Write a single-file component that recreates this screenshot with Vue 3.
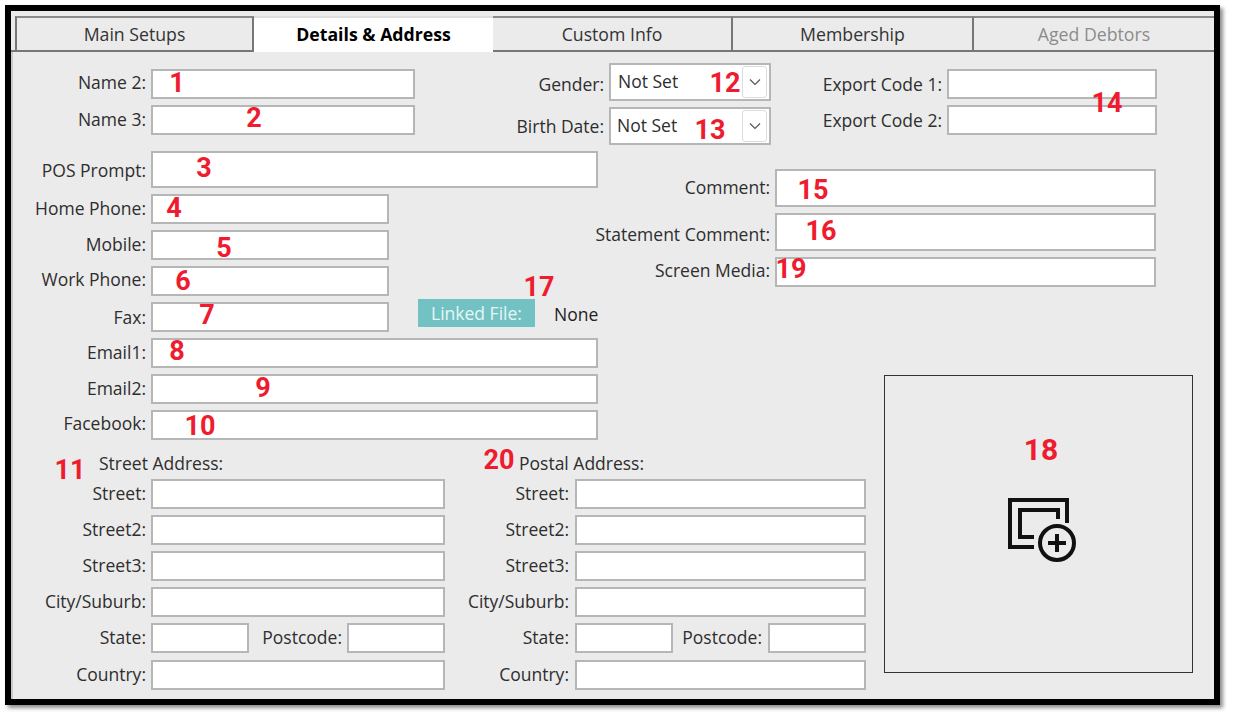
<script setup>
const tabs = [
  { label: 'Main Setups' },
  { label: 'Details & Address', active: true },
  { label: 'Custom Info' },
  { label: 'Membership' },
  { label: 'Aged Debtors', disabled: true },
]
const addresses = [
  { title: 'Street Address:', cls: 'addr-left' },
  { title: 'Postal Address:', cls: 'addr-right' },
]
const marks = [
  ['1', 177, 83], ['2', 254, 118], ['3', 204, 168], ['4', 174, 208], ['5', 224, 248],
  ['6', 183, 281], ['7', 207, 315], ['8', 177, 351], ['9', 263, 388], ['10', 200, 426],
  ['11', 70, 470], ['12', 725, 83], ['13', 710, 130], ['14', 1107, 103], ['15', 813, 190],
  ['16', 821, 231], ['17', 539, 287], ['18', 1041, 450, 30], ['19', 791, 269], ['20', 499, 460],
]
</script>

<template>
  <div class="frame">
    <div class="tabs">
      <div
        v-for="t in tabs"
        :key="t.label"
        class="tab"
        :class="{ active: t.active, disabled: t.disabled }"
      >{{ t.label }}</div>
    </div>

    <div class="panel">
      <div class="band-top">
        <div class="names">
          <div class="row"><label class="lab lab-left up">Name 2:</label><input class="field w264" /></div>
          <div class="row"><label class="lab lab-left">Name 3:</label><input class="field w264" /></div>
        </div>
        <div class="selects">
          <div class="row tall">
            <label class="lab lab-sel down">Gender:</label>
            <div class="select"><span class="sel-text">Not Set</span>
              <span class="drop"><svg width="12" height="8" viewBox="0 0 12 8"><path d="M1 1.5 L6 6.5 L11 1.5" fill="none" stroke="#555" stroke-width="1.2" /></svg></span>
            </div>
          </div>
          <div class="row tall">
            <label class="lab lab-sel flat">Birth Date:</label>
            <div class="select second"><span class="sel-text">Not Set</span>
              <span class="drop"><svg width="12" height="8" viewBox="0 0 12 8"><path d="M1 1.5 L6 6.5 L11 1.5" fill="none" stroke="#555" stroke-width="1.2" /></svg></span>
            </div>
          </div>
        </div>
        <div class="exports">
          <div class="row"><label class="lab lab-exp flat">Export Code 1:</label><input class="field w210" /></div>
          <div class="row"><label class="lab lab-exp flat">Export Code 2:</label><input class="field w210" /></div>
        </div>
      </div>

      <div class="left-form">
        <div class="row pos"><label class="lab lab-left flat">POS Prompt:</label><input class="field w447" /></div>
        <div class="row"><label class="lab lab-left">Home Phone:</label><input class="field w238" /></div>
        <div class="row"><label class="lab lab-left">Mobile:</label><input class="field w238" /></div>
        <div class="row"><label class="lab lab-left up">Work Phone:</label><input class="field w238" /></div>
        <div class="row">
          <label class="lab lab-left flat">Fax:</label><input class="field w238" />
          <span class="linked">Linked File:</span>
          <span class="none">None</span>
        </div>
        <div class="row"><label class="lab lab-left">Email1:</label><input class="field w447" /></div>
        <div class="row"><label class="lab lab-left">Email2:</label><input class="field w447" /></div>
        <div class="row"><label class="lab lab-left up">Facebook:</label><input class="field w447" /></div>
      </div>

      <div class="right-form">
        <div class="row tall"><label class="lab lab-com">Comment:</label><input class="field w381" /></div>
        <div class="row tall"><label class="lab lab-com down">Statement Comment:</label><input class="field w381" /></div>
        <div class="row"><label class="lab lab-com up">Screen Media:</label><input class="field w381" /></div>
      </div>

      <div class="image-box">
        <svg class="add-icon" width="75" height="82" viewBox="0 0 75 82">
          <path d="M66 40 V17 H9 V64 H33" fill="none" stroke="#111" stroke-width="4" />
          <path d="M57 36 V27 H19 V54 H33" fill="none" stroke="#111" stroke-width="4" />
          <circle cx="56" cy="60" r="17" fill="none" stroke="#111" stroke-width="4" />
          <path d="M47 60 H65 M56 51 V69" fill="none" stroke="#111" stroke-width="4" />
        </svg>
      </div>

      <div class="addresses">
        <div v-for="a in addresses" :key="a.title" class="addr" :class="a.cls">
          <div class="addr-title">{{ a.title }}</div>
          <div class="row"><label class="lab lab-addr">Street:</label><input class="field grow" /></div>
          <div class="row"><label class="lab lab-addr">Street2:</label><input class="field grow" /></div>
          <div class="row"><label class="lab lab-addr">Street3:</label><input class="field grow" /></div>
          <div class="row"><label class="lab lab-addr">City/Suburb:</label><input class="field grow" /></div>
          <div class="row">
            <label class="lab lab-addr">State:</label><input class="field w98" />
            <label class="lab lab-post">Postcode:</label><input class="field w98" />
          </div>
          <div class="row country"><label class="lab lab-addr">Country:</label><input class="field grow" /></div>
        </div>
      </div>
    </div>
  </div>

  <span
    v-for="m in marks"
    :key="m[0]"
    class="mark"
    :style="{ left: m[1] + 'px', top: m[2] + 'px', fontSize: m[3] ? m[3] + 'px' : null }"
  >{{ m[0] }}</span>
</template>

<style>
html, body { margin: 0; background: #fff; }
#app { position: relative; width: 1233px; height: 718px; overflow: hidden; }
</style>

<style scoped>
.frame {
  box-sizing: border-box;
  width: 1215px;
  height: 700px;
  margin: 5px 0 0 5px;
  border: 6px solid #000;
  background: #ebebeb;
  box-shadow: 3px 3px 4px rgba(0, 0, 0, 0.45);
  font-family: "Open Sans", "Noto Sans", sans-serif;
  font-size: 17.5px;
  color: #2e2e2e;
  display: flex;
  flex-direction: column;
}
.tabs {
  display: grid;
  grid-template-columns: 239px 239px 240px 241px 1fr;
  margin-top: 5px;
  padding-left: 4px;
  height: 34px;
  border-bottom: 2px solid #777;
  flex: none;
}
.tab {
  display: flex;
  align-items: center;
  justify-content: center;
  border-top: 2px solid #8a8a8a;
  border-right: 2px solid #777;
  box-sizing: border-box;
  font-size: 17.7px;
  padding-bottom: 3px;
  color: #333;
}
.tab:first-child { border-left: 2px solid #777; }
.tab:last-child { border-right: none; }
.tab.active {
  background: #fff;
  color: #000;
  font-weight: 700;
  height: 36px;
  border-top: 2px solid #ddd;
  border-right: none;
}
.tab.disabled { color: #8c8c8c; }

.panel {
  flex: 1;
  display: grid;
  grid-template-columns: 589px 270px 344px;
  grid-template-rows: 93px 230px 77px 1fr;
  grid-template-areas:
    "top  top  top"
    "left right right"
    "left .    img"
    "addr addr img";
  box-shadow: inset 2px 0 0 #c9c9c9;
}
.band-top { grid-area: top; display: flex; }
.left-form { grid-area: left; padding-top: 6px; display: flex; flex-direction: column; gap: 6px; }
.right-form { grid-area: right; padding-top: 24px; display: flex; flex-direction: column; gap: 6px; }

.names { width: 404px; padding-top: 17px; display: flex; flex-direction: column; gap: 6px; }
.selects { padding-top: 11px; display: flex; flex-direction: column; gap: 6px; }
.exports { padding-top: 17px; display: flex; flex-direction: column; gap: 6px; }

.row { display: flex; align-items: center; height: 30px; gap: 5px; }
.row.tall { height: 38px; }
.row.pos { height: 37px; }
.lab { display: flex; justify-content: flex-end; flex: none; white-space: nowrap; padding-bottom: 2px; }
.lab.up { padding-bottom: 5px; }
.lab.flat { padding-bottom: 0; }
.lab.down { padding-bottom: 0; padding-top: 3px; }
.lab-left { width: 135px; }
.lab-sel { width: 189px; }
.lab-exp { width: 171px; }
.lab-com { width: 170px; }
.lab-addr { width: 135px; }
.lab-post { flex: 1; margin-left: 5px; }
.addr-right .lab-post { margin-left: 2px; }

.field {
  box-sizing: border-box;
  height: 100%;
  border: 2px solid #b6b6b6;
  background: #fff;
  margin: 0;
  padding: 0;
  outline: none;
  flex: none;
}
.w264 { width: 264px; }
.w210 { width: 210px; }
.w447 { width: 447px; }
.w238 { width: 238px; }
.w381 { width: 381px; }
.w98 { width: 98px; }
.grow { flex: 1; min-width: 0; }

.select {
  box-sizing: border-box;
  width: 162px;
  height: 38px;
  border: 2px solid #b6b6b6;
  background: #fff;
  display: flex;
  align-items: center;
  justify-content: space-between;
  padding: 0 2px 0 7px;
}
.select.second { padding-left: 6px; }
.sel-text { padding-bottom: 2px; }
.drop {
  box-sizing: border-box;
  width: 25px;
  height: 32px;
  border: 1px solid #dcdcdc;
  border-radius: 3px;
  display: flex;
  align-items: center;
  justify-content: center;
}

.linked {
  box-sizing: border-box;
  width: 117px;
  height: 28px;
  margin: 0 0 8px 24px;
  background: #72c2c3;
  color: #e6f6f6;
  display: flex;
  align-items: center;
  justify-content: center;
  flex: none;
}
.none { margin: 0 0 6px 14px; color: #222; }

.image-box {
  grid-area: img;
  box-sizing: border-box;
  width: 309px;
  height: 298px;
  margin-left: 14px;
  border: 1.5px solid #333;
  display: flex;
  align-items: center;
  justify-content: center;
}

.addresses { grid-area: addr; display: flex; }
.addr { display: flex; flex-direction: column; gap: 6px; }
.addr-title { height: 22px; line-height: 22px; margin-bottom: -1px; white-space: nowrap; }
.country { margin-top: 1px; }
.addr-left { width: 434px; }
.addr-left .addr-title { padding-left: 88px; }
.addr-right { width: 421px; }
.addr-right .addr-title { padding-left: 74px; }
.addr-right .lab-addr { width: 124px; }
.addr-right .row { gap: 6px; }

.mark {
  position: absolute;
  transform: translate(-50%, -50%);
  font-family: Roboto, "Open Sans", sans-serif;
  font-weight: 700;
  font-size: 27px;
  line-height: 1;
  color: #ee1c2e;
}
</style>
